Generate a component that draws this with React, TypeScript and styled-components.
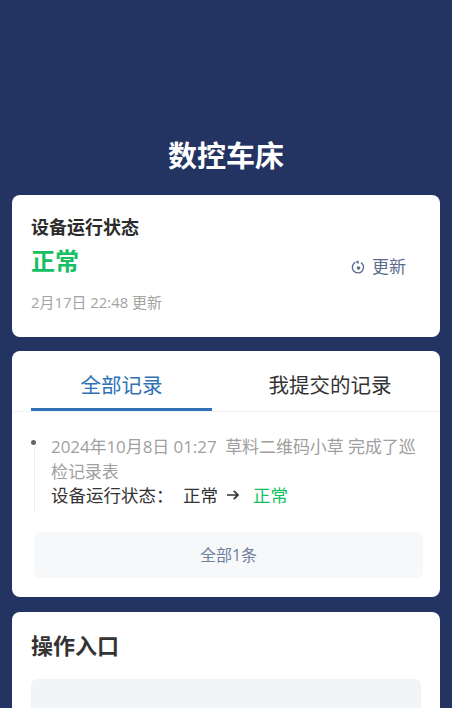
import React from "react";
import styled, { createGlobalStyle } from "styled-components";

const GlobalStyle = createGlobalStyle`
  html, body {
    margin: 0;
    padding: 0;
    height: 100%;
    overflow: hidden;
    background: #233463;
    font-family: "Open Sans", "Noto Sans CJK SC", sans-serif;
  }
`;

const App = () => {
  return (
    <Page>
      <GlobalStyle />
      <Title>数控车床</Title>

      <StatusCard>
        <StatusLabel>设备运行状态</StatusLabel>
        <StatusRow>
          <StatusValue>正常</StatusValue>
          <RefreshButton>
            <svg width="15" height="15" viewBox="0 0 15 15" fill="none">
              <path
                d="M10.4 2.9a5.6 5.6 0 1 1-6.6-.2"
                stroke="#5b6b8c"
                strokeWidth="1.4"
                strokeLinecap="round"
              />
              <path d="M7.6 0.2v3.8L4.4 2.1z" fill="#5b6b8c" />
              <circle cx="7.5" cy="8" r="1.8" fill="#5b6b8c" />
            </svg>
            更新
          </RefreshButton>
        </StatusRow>
        <UpdatedAt>2月17日 22:48 更新</UpdatedAt>
      </StatusCard>

      <RecordCard>
        <Tabs>
          <Tab active>全部记录</Tab>
          <Tab>我提交的记录</Tab>
        </Tabs>
        <Timeline>
          <Dot />
          <RecordMeta>2024年10月8日 01:27&nbsp; 草料二维码小草 完成了巡检记录表</RecordMeta>
          <RecordChange>
            <ChangeLabel>设备运行状态：</ChangeLabel>
            <span>正常</span>
            <Arrow viewBox="0 0 14 14" fill="none">
              <path
                d="M1 7h11M7.8 2.8 12 7l-4.2 4.2"
                stroke="#333"
                strokeWidth="1.7"
              />
            </Arrow>
            <NewValue>正常</NewValue>
          </RecordChange>
        </Timeline>
        <AllButton>全部1条</AllButton>
      </RecordCard>

      <ActionCard>
        <ActionTitle>操作入口</ActionTitle>
        <ActionBox />
      </ActionCard>
    </Page>
  );
};

export default App;

const Page = styled.div`
  height: 708px;
  overflow: hidden;
  padding: 0 12px;
  box-sizing: border-box;
  background: #233463;
`;

const Title = styled.h1`
  margin: 0;
  padding-top: 136px;
  height: 59px;
  line-height: 40px;
  box-sizing: content-box;
  text-align: center;
  font-size: 29px;
  font-weight: 700;
  color: #fff;
`;

const Card = styled.div`
  background: #fff;
  border-radius: 8px;
`;

const StatusCard = styled(Card)`
  height: 142px;
  box-sizing: border-box;
  padding: 20px 19px 0;
  margin-bottom: 14px;
`;

const StatusLabel = styled.div`
  font-size: 18px;
  line-height: 25px;
  font-weight: 700;
  color: #2b2b2b;
`;

const StatusRow = styled.div`
  display: flex;
  justify-content: space-between;
  align-items: flex-start;
  height: 45px;
  padding-top: 4px;
  box-sizing: border-box;
`;

const StatusValue = styled.div`
  font-size: 24px;
  line-height: 34px;
  font-weight: 700;
  color: #17bf63;
`;

const RefreshButton = styled.div`
  display: flex;
  align-items: center;
  gap: 6px;
  margin: 11px 15px 0 0;
  font-size: 17px;
  line-height: 24px;
  color: #5b6b8c;
`;

const UpdatedAt = styled.div`
  font-size: 14.9px;
  line-height: 20px;
  margin-top: 7px;
  color: #a3a3a3;
`;

const RecordCard = styled(Card)`
  height: 246px;
  margin-bottom: 15px;
`;

const Tabs = styled.div`
  display: flex;
  height: 60px;
  padding: 0 19px;
  border-bottom: 1px solid #f1f2f4;
`;

const Tab = styled.div<{ active?: boolean }>`
  width: ${({ active }) => (active ? "181px" : "auto")};
  flex: ${({ active }) => (active ? "none" : "1")};
  padding-left: ${({ active }) => (active ? "0" : "27px")};
  text-align: center;
  font-size: 20.5px;
  line-height: 68px;
  height: 60px;
  box-sizing: border-box;
  color: ${({ active }) => (active ? "#2f72b8" : "#333")};
  border-bottom: ${({ active }) => (active ? "3px solid #2f72b8" : "none")};
`;

const Timeline = styled.div`
  position: relative;
  margin: 22px 0 0 22px;
  padding: 0 16px 0 17px;
  height: 79px;

  &::before {
    content: "";
    position: absolute;
    left: 0;
    top: 13px;
    bottom: 0;
    width: 1px;
    background: #eee;
  }
`;

const Dot = styled.span`
  position: absolute;
  left: -3px;
  top: 6px;
  width: 5px;
  height: 5px;
  border-radius: 50%;
  background: #666;
`;

const RecordMeta = styled.div`
  font-size: 17px;
  line-height: 25px;
  letter-spacing: -0.08px;
  color: #a0a0a0;
`;

const RecordChange = styled.div`
  display: flex;
  align-items: center;
  margin-top: -1px;
  font-size: 17.5px;
  line-height: 24px;
  color: #333;
`;

const ChangeLabel = styled.span`
  width: 132px;
  flex: none;
`;

const Arrow = styled.svg`
  width: 14px;
  height: 14px;
  margin: 0 13px 0 8px;
`;

const NewValue = styled.span`
  color: #17bf63;
`;

const AllButton = styled.div`
  margin: 19px 17px 0 22px;
  height: 46px;
  border-radius: 6px;
  background: #f7f8f9;
  text-align: center;
  font-size: 16px;
  line-height: 46px;
  color: #6f7f9f;
`;

const ActionCard = styled(Card)`
  height: 140px;
  padding: 18px 19px 0;
`;

const ActionTitle = styled.div`
  font-size: 22px;
  line-height: 30px;
  font-weight: 700;
  color: #333;
`;

const ActionBox = styled.div`
  margin-top: 19px;
  height: 60px;
  border-radius: 6px;
  background: #f2f5f8;
`;
